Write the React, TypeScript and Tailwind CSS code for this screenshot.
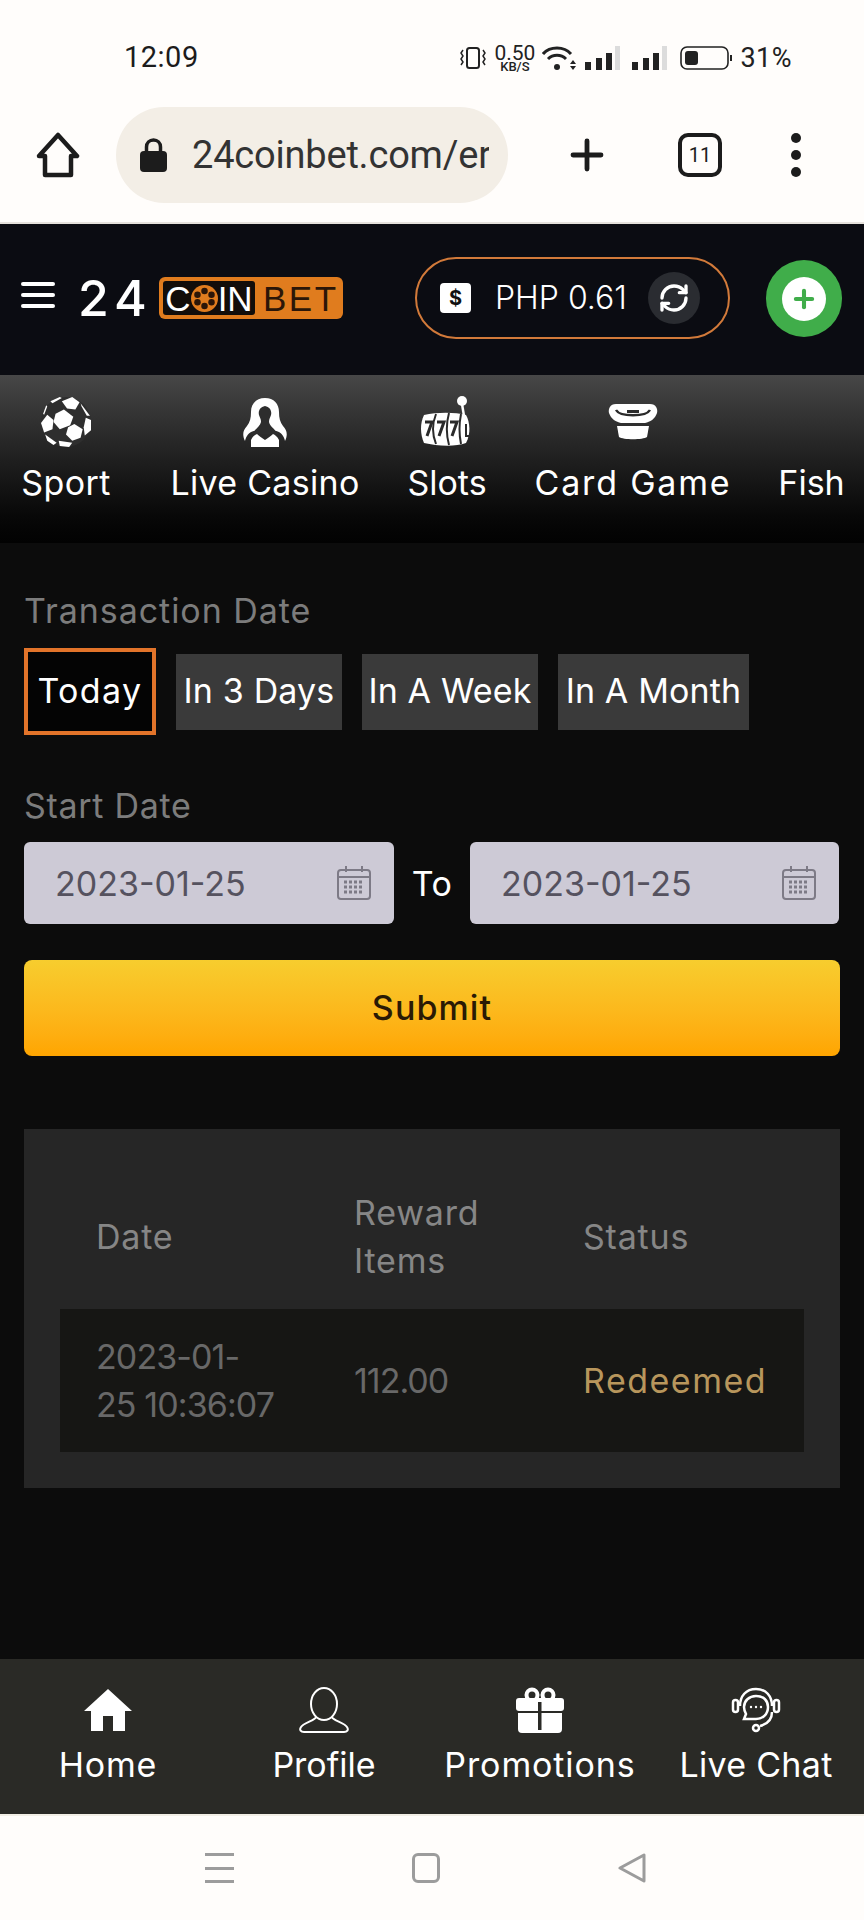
import React from "react";
import { Plus, RefreshCw } from "lucide-react";

const SoccerIcon = () => (
    <svg width="50" height="50" viewBox="0 0 48 48">
        <circle cx="24" cy="24" r="24" fill="#2e2e2e" />
        <g fill="#fff">
            <path d="M22 12 L31 19 L28 27 L18 31 L12 24 L14 16 Z" />
            <path d="M20 4 L30 0 L37 5 L33 12 L25 11 Z" />
            <path d="M43 20 L48 22 L48 32 L42 37 L41 29 Z" />
            <path d="M32 26 L40 31 L38 39 L30 42 L24 36 L26 29 Z" />
            <path d="M6 17 L12 22 L11 31 L3 34 L0 25 Z" />
            <path d="M4 36 L15 44 L12 46 L6 42 Z" />
            <path d="M17 42 L30 44 L27 48 L18 47 Z" />
            <path d="M9 4 L18 0 L20 1 L11 6 Z" />
            <path d="M2 16 L5 8 L6 9 L3 17 Z" />
            <path d="M38 6 L47 18 L44 18 L39 9 Z" />
        </g>
    </svg>
);

const WomanIcon = () => (
    <svg width="44" height="49" viewBox="0 0 44 49">
        <path fill="#fff" d="M22 0 C31 0 36 6 36 14 C36 20 37 24 40 28 C44 32 45 37 42 43 C41 38 38 34 33 33 L11 33 C6 34 3 38 2 43 C-1 37 0 32 4 28 C7 24 8 20 8 14 C8 6 13 0 22 0 Z" />
        <path fill="#2d2d2d" d="M22 8 C27 9 29 13 28 17 C27 20 26 21 26 24 C27 28 30 30 36 36 L8 36 C14 30 17 28 18 24 C18 21 17 20 16 17 C15 13 17 9 22 8 Z" />
        <path fill="#fff" d="M8 49 L8 42 C10 38 12 37 14 36 C16 38 19 40 22 42 C25 40 28 38 30 36 C32 37 34 38 36 42 L36 49 Z" />
    </svg>
);

const SlotsIcon = () => (
    <svg width="56" height="52" viewBox="0 0 56 52">
        <circle cx="43" cy="5" r="5" fill="#fff" />
        <path d="M43 8 L45 20" stroke="#fff" strokeWidth="2.5" fill="none" />
        <path fill="#fff" d="M5 19 C18 16 36 16 47 19 C51 26 52 38 47 47 C36 51 18 50 5 47 C1 38 1 27 5 19 Z" />
        <path d="M17 18 C13 28 13 38 17 48 M30 17 C27 28 27 38 30 49 M42 18 C40 28 40 38 42 48" stroke="#2a2a2a" strokeWidth="2" fill="none" />
        <path d="M6 26 L13 26 L8 40 M18 26 L25 26 L20 40 M31 26 L38 26 L33 40" stroke="#2a2a2a" strokeWidth="3" fill="none" />
        <path d="M47 28 L47 40 L50 40" stroke="#2a2a2a" strokeWidth="2" fill="none" />
    </svg>
);

const BowlIcon = () => (
    <svg width="50" height="36" viewBox="0 0 50 36">
        <path fill="#fff" d="M8 0 L42 0 C48 0 50 5 49 9 C47 15 42 18 37 19 L13 19 C8 18 3 15 1 9 C0 5 2 0 8 0 Z" />
        <path d="M8 6 C12 13 38 13 42 6" stroke="#2a2a2a" strokeWidth="2.5" fill="none" />
        <path d="M19 6 L31 6 L31 9 L19 9 Z" fill="#2a2a2a" />
        <path fill="#fff" d="M9 22 L41 22 L39 33 C35 36 15 36 11 33 Z" />
    </svg>
);

const HomeIcon = () => (
    <svg width="48" height="42" viewBox="0 0 48 42">
        <path fill="#fff" d="M24 0 L48 22 L41 22 L41 42 L29 42 L29 27 L19 27 L19 42 L7 42 L7 22 L0 22 Z" />
    </svg>
);

const ProfileIcon = () => (
    <svg width="50" height="46" viewBox="0 0 50 46" fill="none" stroke="#fff" strokeWidth="2">
        <ellipse cx="25" cy="17" rx="13" ry="16" />
        <path d="M17 30 C17 33 4 36 2 40 C0 43 2 45 5 45 L45 45 C48 45 50 43 48 40 C46 36 33 33 33 30" />
    </svg>
);

const GiftIcon = () => (
    <svg width="50" height="46" viewBox="0 0 50 46">
        <circle cx="17" cy="8" r="5.5" fill="none" stroke="#fff" strokeWidth="4" />
        <circle cx="33" cy="8" r="5.5" fill="none" stroke="#fff" strokeWidth="4" />
        <path fill="#fff" d="M4 11 L46 11 Q49 11 49 14 L49 21 Q49 24 46 24 L4 24 Q1 24 1 21 L1 14 Q1 11 4 11 Z" />
        <path fill="#fff" d="M3 26 L47 26 L47 42 Q47 46 43 46 L7 46 Q3 46 3 42 Z" />
        <rect x="23" y="15" width="3.5" height="28" fill="#2a2a26" />
    </svg>
);

const ChatIcon = () => (
    <svg width="50" height="46" viewBox="0 0 50 46" fill="none" stroke="#fff" strokeWidth="2.5">
        <path d="M9 19 C9 9 15 2 25 2 C35 2 41 9 41 19" />
        <rect x="2" y="13" width="5" height="12" rx="2.5" />
        <rect x="43" y="13" width="5" height="12" rx="2.5" />
        <path d="M25 9 C33 9 37 14 37 20 C37 27 32 32 25 32 L13 32 L15 27 C14 25 13 23 13 20 C13 14 18 9 25 9 Z" />
        <path d="M41 25 C41 32 37 37 29 39" />
        <circle cx="25" cy="41" r="3" />
        <circle cx="20" cy="20" r="1.2" fill="#fff" stroke="none" />
        <circle cx="25" cy="20" r="1.2" fill="#fff" stroke="none" />
        <circle cx="30" cy="20" r="1.2" fill="#fff" stroke="none" />
    </svg>
);

const CalendarIcon = () => (
    <svg width="34" height="34" viewBox="0 0 34 34" fill="none" stroke="#7d7a86" strokeWidth="2">
        <rect x="1" y="4" width="32" height="29" rx="3" />
        <path d="M1 11 L33 11 M9 0 L9 6 M25 0 L25 6" />
        <path d="M7 16 H27 M7 21 H27 M7 26 H27" strokeWidth="3" strokeDasharray="3 2" />
    </svg>
);

const CoinIcon = () => (
    <svg width="27" height="27" viewBox="0 0 25 25">
        <circle cx="12.5" cy="12.5" r="12.5" fill="#e07c1e" />
        <circle cx="12.5" cy="5.5" r="3" fill="#2b1608" />
        <circle cx="12.5" cy="19.5" r="3" fill="#2b1608" />
        <circle cx="6" cy="9" r="3" fill="#2b1608" />
        <circle cx="19" cy="9" r="3" fill="#2b1608" />
        <circle cx="6" cy="16" r="3" fill="#2b1608" />
        <circle cx="19" cy="16" r="3" fill="#2b1608" />
    </svg>
);

const LockIcon = () => (
    <svg className="shrink-0" width="27" height="34" viewBox="0 0 27 34">
        <path d="M6.5 14 L6.5 9 C6.5 5 9.5 2 13.5 2 C17.5 2 20.5 5 20.5 9 L20.5 14" fill="none" stroke="#1c1c1c" strokeWidth="3.5" />
        <rect x="0" y="13" width="27" height="21" rx="4" fill="#1c1c1c" />
    </svg>
);

const StatusIcons = () => (
    <div className="flex items-center">
        <svg width="28" height="22" viewBox="0 0 28 22" fill="none" stroke="#222" strokeWidth="1.5">
            <rect x="8" y="1" width="12" height="20" rx="2.5" strokeWidth="2" />
            <path d="M4 3 L2 6 L4 9 L2 12 L4 15 L2 18 M24 3 L26 6 L24 9 L26 12 L24 15 L26 18" />
        </svg>
        <div className="ml-[6px] w-[43px] flex flex-col items-center text-[#222]">
            <span className="text-[21px] leading-[16px]">0.50</span>
            <span className="text-[13px] leading-[11px] font-medium">KB/S</span>
        </div>
        <svg className="ml-[6px]" width="35" height="26" viewBox="0 0 35 26" fill="none" stroke="#222">
            <path d="M1 9 C8 1 22 1 29 9" strokeWidth="3" />
            <path d="M6 14 C11 9 19 9 24 14" strokeWidth="3" />
            <circle cx="15" cy="22" r="3" fill="#222" stroke="none" />
            <path d="M31 15 L34 19 L28 19 Z M28 21 L34 21 L31 25 Z" fill="#222" stroke="none" />
        </svg>
        {[0, 1].map((n) => (
            <svg key={n} className={n === 0 ? "ml-[8px]" : "ml-[12px]"} width="35" height="25" viewBox="0 0 35 25">
                <rect x="0" y="16" width="6" height="8" fill="#222" />
                <rect x="11" y="12" width="6" height="12" fill="#222" />
                <rect x="21" y="7" width="6" height="17" fill="#222" />
                <rect x="30" y="0" width="5" height="24" fill="#dcdcdc" />
            </svg>
        ))}
        <svg className="ml-[13px]" width="53" height="24" viewBox="0 0 53 24" fill="none">
            <rect x="1" y="1" width="47" height="22" rx="6" stroke="#222" strokeWidth="1.6" />
            <rect x="5" y="5" width="13" height="14" rx="3" fill="#222" />
            <path d="M51 9 L51 15" stroke="#222" strokeWidth="2" />
        </svg>
        <span className="ml-[7px] text-[27px] leading-none text-[#222] tracking-[0.5px]">31%</span>
    </div>
);

const navItems = [
    { label: "Sport", icon: <SoccerIcon />, w: "w-[88px]", ml: "ml-0", track: "tracking-[0.4px]" },
    { label: "Live Casino", icon: <WomanIcon />, w: "w-[188px]", ml: "ml-[61px]", track: "tracking-[0.3px]" },
    { label: "Slots", icon: <SlotsIcon />, w: "w-[78px]", ml: "ml-[49px]", track: "tracking-[0px]" },
    { label: "Card Game", icon: <BowlIcon />, w: "w-[198px]", ml: "ml-[48px]", track: "tracking-[1.8px]" },
    { label: "Fish", icon: null, w: "w-[63px]", ml: "ml-[48px]", track: "tracking-[0px]" },
];

const rangeTabs = [
    { label: "In 3 Days", w: "w-[166px]" },
    { label: "In A Week", w: "w-[176px]" },
    { label: "In A Month", w: "w-[191px]" },
];

const bottomItems = [
    { label: "Home", icon: <HomeIcon />, track: "tracking-[0.8px]" },
    { label: "Profile", icon: <ProfileIcon />, track: "tracking-[0px]" },
    { label: "Promotions", icon: <GiftIcon />, track: "tracking-[0.9px]" },
    { label: "Live Chat", icon: <ChatIcon />, track: "tracking-[0.3px]" },
];

const DateInput = ({ className }: { className: string }) => (
    <div className={`h-[82px] rounded-[6px] bg-[#cdcad6] flex items-center justify-between pl-[31px] pr-[23px] ${className}`}>
        <span className="text-[34px] text-[#55525f]">2023-01-25</span>
        <CalendarIcon />
    </div>
);

export default function App() {
    return (
        <div
            className="w-[864px] h-[1920px] flex flex-col overflow-hidden bg-[#0c0c0c]"
            style={{ fontFamily: "Inter, 'Liberation Sans', sans-serif" }}
        >
            {/* browser chrome */}
            <div className="h-[224px] shrink-0 bg-[#fffdfb] border-b-2 border-[#e6e2dc]">
                <div className="h-[36px] mt-[40px] pl-[124px] pr-[72px] flex items-center justify-between" style={{ fontFamily: "Roboto, sans-serif" }}>
                    <span className="text-[29px] text-[#1c1c1c] tracking-[0.5px]">12:09</span>
                    <StatusIcons />
                </div>
                <div className="mt-[31px] h-[96px] flex items-center">
                    <svg className="ml-[36px]" width="44" height="46" viewBox="0 0 44 46" fill="none" stroke="#1c1c1c" strokeWidth="4.5" strokeLinejoin="round">
                        <path d="M22 3 L41 24 L35 24 L35 43 L9 43 L9 24 L3 24 Z" />
                    </svg>
                    <div className="ml-[36px] w-[392px] h-[96px] rounded-[48px] bg-[#f3eee6] flex items-center pl-[24px] pr-[19px] overflow-hidden">
                        <LockIcon />
                        <span className="ml-[25px] text-[38px] tracking-[-0.2px] text-[#333] whitespace-nowrap overflow-hidden" style={{ fontFamily: "Roboto, sans-serif" }}>
                            24coinbet.com/er
                        </span>
                    </div>
                    <Plus className="ml-[55px]" size={48} stroke="#1c1c1c" strokeWidth={2.4} />
                    <div className="ml-[67px] w-[44px] h-[44px] rounded-[10px] border-[4px] border-[#1c1c1c] flex items-center justify-center text-[20px] text-[#1c1c1c]" style={{ fontFamily: "Roboto, sans-serif" }}>
                        11
                    </div>
                    <div className="ml-[69px] flex flex-col gap-[7px]">
                        <span className="w-[10px] h-[10px] rounded-full bg-[#1c1c1c]" />
                        <span className="w-[10px] h-[10px] rounded-full bg-[#1c1c1c]" />
                        <span className="w-[10px] h-[10px] rounded-full bg-[#1c1c1c]" />
                    </div>
                </div>
            </div>

            {/* site header */}
            <div className="h-[151px] shrink-0 bg-[#0b0c12] flex items-start">
                <div className="ml-[21px] mt-[58px] w-[34px] flex flex-col gap-[7px]">
                    <span className="h-[4px] bg-white rounded-full" />
                    <span className="h-[4px] bg-white rounded-full" />
                    <span className="h-[4px] bg-white rounded-full" />
                </div>
                <span className="ml-[23px] mt-[50px] w-[70px] text-[50px] leading-[48px] font-medium text-white tracking-[6px] whitespace-nowrap">
                    24
                </span>
                <div className="ml-[11px] mt-[53px] w-[184px] h-[42px] rounded-[6px] bg-[#e07c1e] flex items-center p-[4px]">
                    <div className="w-[92px] h-[34px] rounded-[3px] bg-[#120d0a] flex items-center justify-center text-[35px] leading-none text-white" style={{ fontFamily: "'Liberation Sans', sans-serif" }}>
                        C<CoinIcon />IN
                    </div>
                    <span className="ml-[8px] text-[35px] leading-none text-[#2b1608] tracking-[2.5px]" style={{ fontFamily: "'Liberation Sans', sans-serif" }}>BET</span>
                </div>
                <div className="ml-[72px] mt-[33px] w-[315px] h-[82px] rounded-[41px] border-[2.5px] border-[#d27a3a] flex items-center pl-[23px]">
                    <div className="w-[31px] h-[30px] rounded-[4px] bg-white flex items-center justify-center text-[20px] font-bold text-[#111]">$</div>
                    <span className="ml-[24px] w-[131px] text-[32px] font-light text-white whitespace-nowrap">PHP 0.61</span>
                    <div className="ml-[22px] w-[52px] h-[52px] rounded-full bg-[#2a2c31] flex items-center justify-center shrink-0">
                        <RefreshCw size={32} stroke="#fff" strokeWidth={2.5} />
                    </div>
                </div>
                <div className="ml-[36px] mt-[36px] w-[76px] h-[77px] rounded-full bg-[#40ad4a] flex items-center justify-center">
                    <div className="w-[44px] h-[44px] rounded-full bg-white flex items-center justify-center">
                        <Plus size={28} stroke="#40ad4a" strokeWidth={3.5} />
                    </div>
                </div>
            </div>

            {/* game categories */}
            <div className="h-[168px] shrink-0 bg-gradient-to-b from-[#474747] to-[#020202] flex pl-[22px]">
                {navItems.map((item) => (
                    <div key={item.label} className={`${item.w} ${item.ml} shrink-0 flex flex-col items-center`}>
                        <div className="mt-[22px] h-[50px] flex items-center justify-center">{item.icon}</div>
                        <span className={`mt-[11px] text-[34px] leading-[50px] text-white whitespace-nowrap ${item.track}`}>{item.label}</span>
                    </div>
                ))}
            </div>

            {/* filter form */}
            <div className="flex-1 px-[24px]">
                <div className="mt-[48px] text-[34px] leading-[40px] tracking-[0.95px] text-[#7c7c7c]">Transaction Date</div>
                <div className="mt-[17px] flex items-center">
                    <div className="w-[132px] h-[87px] pb-[2px] border-[4px] border-[#e2742a] bg-[#040404] flex items-center justify-center text-[34px] tracking-[1.4px] text-white">
                        Today
                    </div>
                    <div className="flex ml-[20px] gap-[20px]">
                        {rangeTabs.map((tab) => (
                            <div key={tab.label} className={`${tab.w} h-[76px] pb-[2px] bg-[#3a3a3a] flex items-center justify-center text-[34px] tracking-[0.15px] text-white whitespace-nowrap`}>
                                {tab.label}
                            </div>
                        ))}
                    </div>
                </div>
                <div className="mt-[51px] text-[34px] leading-[40px] tracking-[0.7px] text-[#7c7c7c]">Start Date</div>
                <div className="mt-[16px] flex items-center">
                    <DateInput className="w-[370px]" />
                    <span className="w-[76px] text-center text-[34px] tracking-[0.5px] text-white">To</span>
                    <DateInput className="w-[369px]" />
                </div>
                <button className="mt-[36px] w-full h-[96px] pb-[2px] rounded-[8px] bg-gradient-to-b from-[#f7cd2e] to-[#ffa500] text-[34px] tracking-[1.1px] font-medium text-[#2a1a05]">
                    Submit
                </button>

                <div className="mt-[73px] h-[359px] bg-[#262626] px-[36px]">
                    <div className="h-[180px] pt-[36px] pl-[36px] grid grid-cols-[258px_229px_1fr] items-center text-[34px] leading-[48px] tracking-[0.8px] text-[#868686]">
                        <span>Date</span>
                        <span>Reward<br />Items</span>
                        <span>Status</span>
                    </div>
                    <div className="h-[143px] bg-[#161614] pl-[36px] grid grid-cols-[258px_229px_1fr] items-center text-[34px] leading-[48px] text-[#686868]">
                        <span className="tracking-[-0.9px]">2023-01-<br />25 10:36:07</span>
                        <span className="tracking-[-1px]">112.00</span>
                        <span className="text-[#b8965c] tracking-[1.5px]">Redeemed</span>
                    </div>
                </div>
            </div>

            {/* bottom tabs */}
            <div className="h-[155px] shrink-0 bg-[#2a2a26] grid grid-cols-4">
                {bottomItems.map((item) => (
                    <div key={item.label} className="flex flex-col items-center pt-[28px]">
                        <div className="h-[46px] flex items-center justify-center">{item.icon}</div>
                        <span className={`mt-[7px] text-[34px] leading-[50px] text-white whitespace-nowrap ${item.track}`}>{item.label}</span>
                    </div>
                ))}
            </div>

            {/* android nav */}
            <div className="h-[106px] shrink-0 bg-[#fffdfb] border-t-2 border-[#f2efe6] flex items-start pt-[37px] pl-[205px]">
                <div className="w-[29px] h-[30px] flex flex-col justify-between">
                    <span className="h-[3px] bg-[#9c9c9c]" />
                    <span className="h-[3px] bg-[#9c9c9c]" />
                    <span className="h-[3px] bg-[#9c9c9c]" />
                </div>
                <div className="ml-[178px] w-[28px] h-[30px] rounded-[6px] border-[3px] border-[#9c9c9c]" />
                <svg className="ml-[178px]" width="28" height="30" viewBox="0 0 28 30" fill="none" stroke="#9c9c9c" strokeWidth="3" strokeLinejoin="round">
                    <path d="M26 2 L26 28 L2 15 Z" />
                </svg>
            </div>
        </div>
    );
}
